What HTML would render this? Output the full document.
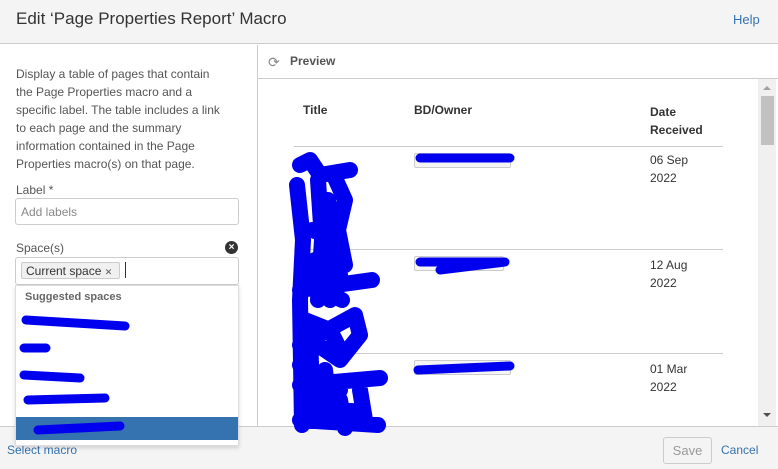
<!DOCTYPE html>
<html><head><meta charset="utf-8"><style>
*{box-sizing:border-box;margin:0;padding:0}
body{width:778px;height:469px;overflow:hidden;background:#fff;font-family:"Liberation Sans",sans-serif;position:relative;color:#333}
.abs{position:absolute}
</style></head><body>
<div class="abs" style="left:0;top:0;width:778px;height:44px;background:#f4f4f4;border-bottom:1px solid #ccc"></div>
<div class="abs" style="left:16px;top:9px;font-size:17px;color:#333">Edit ‘Page Properties Report’ Macro</div>
<div class="abs" style="left:733px;top:12px;font-size:13px;color:#3572b0">Help</div>
<div class="abs" style="left:257px;top:45px;width:1px;height:381px;background:#ccc"></div>
<div class="abs" style="left:16px;top:65px;width:240px;font-size:12px;line-height:18px;color:#555;white-space:nowrap">Display a table of pages that contain<br>the Page Properties macro and a<br>specific label. The table includes a link<br>to each page and the summary<br>information contained in the Page<br>Properties macro(s) on that page.</div>
<div class="abs" style="left:16px;top:183px;font-size:12px;color:#555">Label *</div>
<div class="abs" style="left:15px;top:198px;width:224px;height:27px;border:1px solid #ccc;border-radius:3px;font-size:12px;color:#888;padding:6px 5px">Add labels</div>
<div class="abs" style="left:16px;top:241px;font-size:12px;color:#555">Space(s)</div>
<div class="abs" style="left:225px;top:241px;width:13px;height:13px;border-radius:50%;background:#333;color:#fff;font-size:10px;line-height:13px;text-align:center;font-weight:bold">×</div>
<div class="abs" style="left:258px;top:45px;width:520px;height:34px;border-bottom:1px solid #ccc"></div>
<div class="abs" style="left:268px;top:54px;font-size:14px;color:#888">⟳</div>
<div class="abs" style="left:290px;top:54px;font-size:12px;font-weight:bold;color:#555">Preview</div>
<div class="abs" style="left:758px;top:79px;width:18px;height:347px;background:#f0f0f0"></div>
<div class="abs" style="left:761px;top:96px;width:13px;height:49px;background:#c1c1c1"></div>
<div class="abs" style="left:763px;top:86px;width:0;height:0;border-left:4px solid transparent;border-right:4px solid transparent;border-bottom:4px solid #a0a0a0"></div>
<div class="abs" style="left:763px;top:413px;width:0;height:0;border-left:4px solid transparent;border-right:4px solid transparent;border-top:4px solid #505050"></div>
<div class="abs" style="left:303px;top:103px;font-size:12px;font-weight:bold;color:#333">Title</div>
<div class="abs" style="left:414px;top:103px;font-size:12px;font-weight:bold;color:#333">BD/Owner</div>
<div class="abs" style="left:650px;top:103px;font-size:12px;font-weight:bold;color:#333;line-height:18px">Date<br>Received</div>
<div class="abs" style="left:294px;top:146px;width:429px;height:1px;background:#ccc"></div>
<div class="abs" style="left:294px;top:249px;width:429px;height:1px;background:#ccc"></div>
<div class="abs" style="left:294px;top:353px;width:429px;height:1px;background:#ccc"></div>
<div class="abs" style="left:650px;top:151px;font-size:12px;line-height:18px;color:#333">06 Sep<br>2022</div>
<div class="abs" style="left:650px;top:256px;font-size:12px;line-height:18px;color:#333">12 Aug<br>2022</div>
<div class="abs" style="left:650px;top:360px;font-size:12px;line-height:18px;color:#333">01 Mar<br>2022</div>
<div class="abs" style="left:414px;top:153px;width:97px;height:15px;border:1px solid #ccc;border-radius:2px;background:#f5f5f5"></div>
<div class="abs" style="left:414px;top:256px;width:90px;height:15px;border:1px solid #ccc;border-radius:2px;background:#f5f5f5"></div>
<div class="abs" style="left:414px;top:360px;width:97px;height:15px;border:1px solid #ccc;border-radius:2px;background:#f5f5f5"></div>
<div class="abs" style="left:0;top:426px;width:778px;height:43px;background:#f4f4f4;border-top:1px solid #ccc"></div>
<div class="abs" style="left:7px;top:443px;font-size:12px;color:#3572b0">Select macro</div>
<div class="abs" style="left:663px;top:437px;width:49px;height:27px;border:1px solid #ccc;border-radius:3px;background:#f4f4f4;font-size:13px;color:#999;text-align:center;line-height:25px">Save</div>
<div class="abs" style="left:721px;top:443px;font-size:12px;color:#3572b0">Cancel</div>
<div class="abs" style="left:15px;top:257px;width:224px;height:28px;border:1px solid #ccc;border-radius:3px;background:#fff"></div>
<div class="abs" style="left:21px;top:262px;width:99px;height:17px;background:#f0f0f0;border:1px solid #ccc;border-radius:2px;font-size:12px;color:#333;padding:1px 4px;white-space:nowrap;overflow:hidden">Current space <span style="font-size:9px;color:#555">✕</span></div>
<div class="abs" style="left:125px;top:262px;width:1px;height:16px;background:#333"></div>
<div class="abs" style="left:15px;top:285px;width:224px;height:161px;background:#fff;border:1px solid #ddd;box-shadow:0 2px 4px rgba(0,0,0,.15)"></div>
<div class="abs" style="left:25px;top:291px;font-size:11px;font-weight:bold;color:#666">Suggested spaces</div>
<div class="abs" style="left:16px;top:417px;width:222px;height:23px;background:#3572b0"></div>
<svg class="abs" style="left:0;top:0" width="778" height="469">
<g stroke="#0000ee" stroke-width="16" fill="none" stroke-linecap="round" stroke-linejoin="round">
<path d="M300 165 L310 160 L320 175 L350 170 M297 185 L303 240 L300 300 L302 425 M318 180 L322 240 L318 300 M335 178 L345 200 L338 230 L345 265 M328 200 L335 260 L330 300 M300 290 L372 280 M305 320 L330 330 L340 350 M300 345 L355 315 L360 335 L340 360 L318 345 M300 365 L320 400 L340 390 M300 385 L380 378 M305 405 L360 412 M340 400 L345 428 M300 420 L378 425 M315 260 L322 290 L342 300 M325 370 L330 410 M360 390 L365 420 M312 230 L340 240 M305 275 L340 275 M310 330 L312 400"/>
<path d="M420 158 L510 158 M420 262 L505 262 L440 270 M418 370 L510 366 M26 320 L125 326 M24 348 L46 348 M24 375 L80 378 M28 400 L105 398 M38 430 L120 426" stroke-width="9"/>
</g>
</svg>
</body></html>
